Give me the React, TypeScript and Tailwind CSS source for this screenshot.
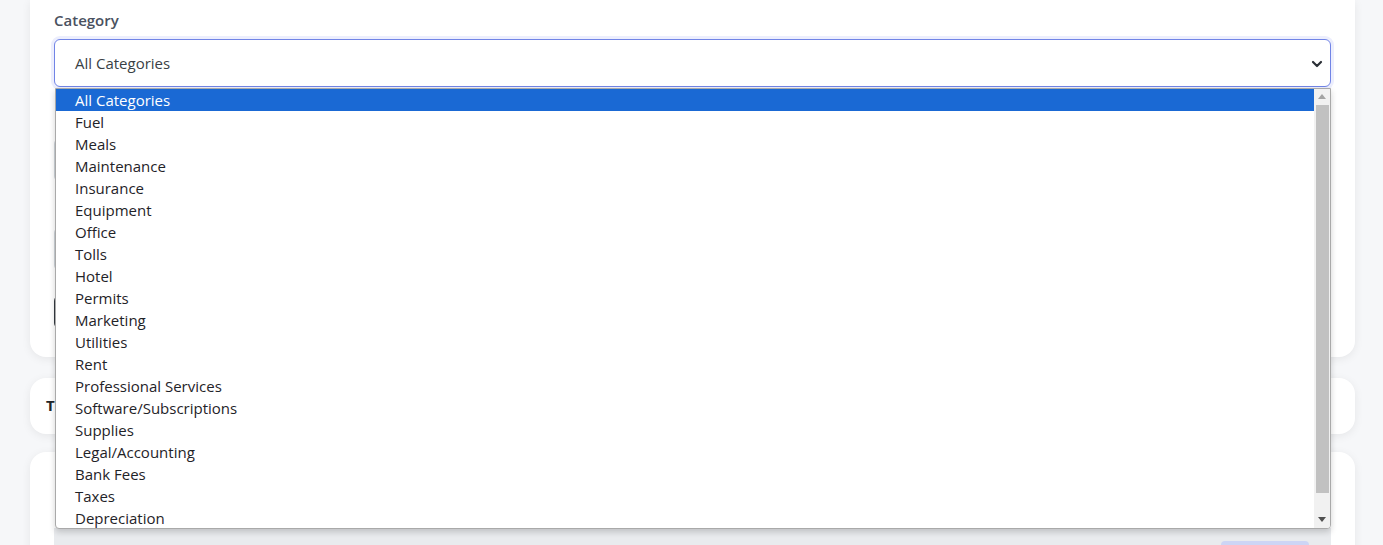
import React from 'react'

const categories = [
  'All Categories',
  'Fuel',
  'Meals',
  'Maintenance',
  'Insurance',
  'Equipment',
  'Office',
  'Tolls',
  'Hotel',
  'Permits',
  'Marketing',
  'Utilities',
  'Rent',
  'Professional Services',
  'Software/Subscriptions',
  'Supplies',
  'Legal/Accounting',
  'Bank Fees',
  'Taxes',
  'Depreciation',
]

const font = { fontFamily: '"Open Sans", "Noto Sans", Arial, sans-serif' }

function Field() {
  return (
    <div className="pt-[29px]">
      <div className="h-[44px] rounded-md border border-[#ced4da] bg-white" />
    </div>
  )
}

export default function App() {
  return (
    <div className="min-h-screen bg-[#f6f7f9] pl-[30px] pr-[28px] overflow-hidden" style={font}>
      {/* filters card */}
      <div className="bg-white rounded-b-2xl shadow-[0_2px_10px_rgba(0,0,0,0.07)] px-6 pt-[9px] pb-[28px]">
        <p className="text-[15px] font-semibold text-[#4a5160] mb-[7px]">Category</p>
        <div className="relative">
          <div className="h-[48px] rounded-md border border-[#7184e6] bg-white shadow-[0_0_0_3px_#eceefd] flex items-center justify-between pl-5 pr-[7px] pt-[2px]">
            <span className="text-[15px] text-[#3a3f45]">All Categories</span>
            <svg width="12" height="10" viewBox="0 0 12 10" className="text-[#2b2f36]">
              <path d="M2 3l4 4 4-4" fill="none" stroke="currentColor" strokeWidth="2.2" strokeLinecap="round" strokeLinejoin="round" />
            </svg>
          </div>

          {/* open dropdown list */}
          <div className="absolute z-10 left-px right-0 top-[calc(100%+1px)] h-[441px] flex bg-white border border-[#a9a9a9] rounded-b-[4px] shadow-[0_3px_6px_rgba(0,0,0,0.18)] overflow-hidden">
            <ul className="flex-1">
              {categories.map((c, i) => (
                <li
                  key={c}
                  className={
                    i === 0
                      ? 'h-[22px] leading-[22px] pl-[19px] text-[15px] bg-[#1a69d4] text-white'
                      : 'h-[22px] leading-[22px] pl-[19px] text-[15px] text-[#1f2328]'
                  }
                >
                  {c}
                </li>
              ))}
            </ul>
            <div className="w-[16px] bg-[#f1f1f1] flex flex-col items-center">
              <div className="h-[16px] flex items-center justify-center">
                <svg width="8" height="5" viewBox="0 0 8 5">
                  <path d="M0 5L4 0l4 5z" fill="#a3a3a3" />
                </svg>
              </div>
              <div className="w-[13px] h-[388px] bg-[#c1c1c1]" />
              <div className="flex-1" />
              <div className="h-[16px] flex items-center justify-center">
                <svg width="8" height="5" viewBox="0 0 8 5">
                  <path d="M0 0l4 5 4-5z" fill="#505050" />
                </svg>
              </div>
            </div>
          </div>
        </div>

        <div className="grid grid-cols-2 gap-6 mt-[22px]">
          <Field />
          <Field />
        </div>
        <div className="grid grid-cols-2 gap-6 mt-[16px]">
          <Field />
          <Field />
        </div>
        <div className="mt-6 flex gap-3">
          <div className="h-[34px] w-[120px] rounded-md bg-[#343a40]" />
        </div>
      </div>

      {/* summary card */}
      <div className="mt-[21px] bg-white rounded-2xl shadow-[0_2px_10px_rgba(0,0,0,0.07)] h-[56px] flex items-center px-4">
        <h3 className="text-[15px] font-bold text-[#212529]">Total Expenses</h3>
      </div>

      {/* table card */}
      <div className="mt-[18px] bg-white rounded-t-2xl shadow-[0_2px_10px_rgba(0,0,0,0.07)] px-6 pt-[76px]">
        <div className="h-[40px] bg-[#e9ebee] flex justify-end pr-[22px] pt-[13px]">
          <div className="w-[88px] h-[20px] rounded bg-[#cdd5f5]" />
        </div>
      </div>
    </div>
  )
}
